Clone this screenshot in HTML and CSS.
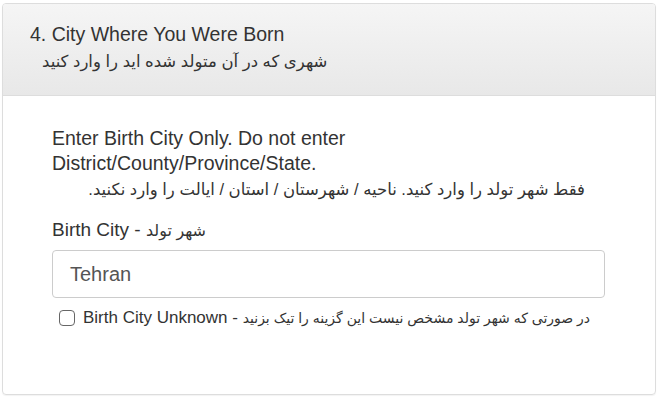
FILE: index.html
```html
<!DOCTYPE html>
<html>
<head>
<meta charset="utf-8">
<link rel="stylesheet" href="styles.css">
</head>
<body>
<div class="panel">
  <div class="panel-heading">
    <div class="title">4. City Where You Were Born</div>
    <div class="title-fa" dir="rtl">شهری که در آن متولد شده اید را وارد کنید</div>
  </div>
  <div class="panel-body">
    <div class="note">Enter Birth City Only. Do not enter<br>District/County/Province/State.</div>
    <div class="note-fa" dir="rtl">فقط شهر تولد را وارد کنید. ناحیه / شهرستان / استان / ایالت را وارد نکنید.</div>
    <label class="label">Birth City - <span class="fa-label" dir="rtl">شهر تولد</span></label>
    <div class="input">Tehran</div>
    <label class="check">
      <span class="box"></span>
      <span class="check-text">Birth City Unknown - <span class="fa-check" dir="rtl">در صورتی که شهر تولد مشخص نیست این گزینه را تیک بزنید</span></span>
    </label>
  </div>
</div>
</body>
</html>
```
FILE: styles.css
```css
html, body {
  margin: 0;
  padding: 0;
  background: #fff;
}
body {
  padding: 3px 3px 3px 2px;
  font-family: "Liberation Sans", "DejaVu Sans", sans-serif;
  color: #333;
}
.panel {
  border: 1px solid #ddd;
  border-radius: 4px;
  height: 392px;
  box-sizing: border-box;
  overflow: hidden;
  box-shadow: 0 1px 1px rgba(0,0,0,0.05);
}
.panel-heading {
  height: 92px;
  box-sizing: border-box;
  padding: 18px 27px 0;
  background: linear-gradient(to bottom, #f5f5f5 0%, #e8e8e8 100%);
  border-bottom: 1px solid #ddd;
}
.title {
  font-size: 19.5px;
  line-height: 24px;
}
.title-fa {
  font-size: 16.5px;
  line-height: 26px;
  margin-top: 2px;
  padding-left: 12px;
  display: inline-block;
}
.panel-body {
  padding: 30px 50px 0 49px;
}
.note {
  font-size: 19.5px;
  line-height: 25px;
}
.note-fa {
  font-size: 16.5px;
  line-height: 26px;
  text-align: right;
  padding-right: 20px;
}
.label {
  display: block;
  font-size: 19px;
  line-height: 22px;
  margin-top: 17px;
}
.fa-label {
  font-size: 16px;
}
.input {
  margin-top: 8px;
  height: 48px;
  box-sizing: border-box;
  border: 1px solid #ccc;
  border-radius: 4px;
  padding: 0 17px;
  font-size: 20px;
  line-height: 46px;
  color: #555;
}
.check {
  display: flex;
  align-items: center;
  margin-top: 10px;
  padding-left: 7px;
  font-size: 17px;
  line-height: 20px;
}
.fa-check {
  font-size: 14px;
}
.box {
  width: 16px;
  height: 16px;
  box-sizing: border-box;
  border: 1px solid #666;
  border-radius: 4px;
  background: #fff;
  margin-right: 8px;
  flex: none;
}
```
